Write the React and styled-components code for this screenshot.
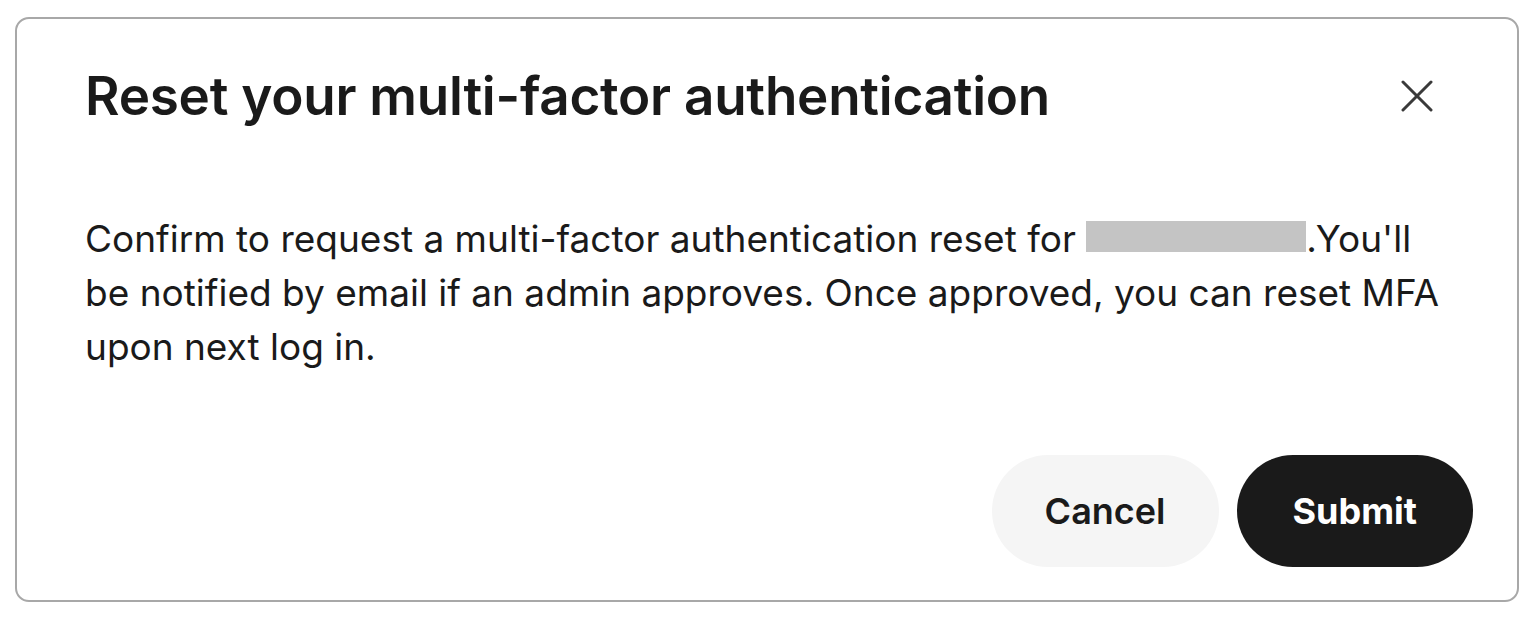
import React from 'react'
import styled, { createGlobalStyle } from 'styled-components'

const GlobalStyle = createGlobalStyle`
  body {
    margin: 0;
    background: #fff;
    font-family: Inter, "Noto Sans", "Liberation Sans", sans-serif;
    color: #1a1a1a;
  }
`

const Page = styled.div`
  padding: 17px 0 0 15px;
`

const Card = styled.div`
  box-sizing: border-box;
  width: 1504px;
  height: 585px;
  border: 2px solid #a8a8a8;
  border-radius: 14px;
  padding: 45px 44px 33px 68px;
  display: flex;
  flex-direction: column;
`

const Header = styled.div`
  display: flex;
  align-items: center;
  justify-content: space-between;
  padding-right: 40px;
`

const Title = styled.h2`
  margin: 0;
  font-size: 53px;
  line-height: 64px;
  font-weight: 600;
  letter-spacing: -0.25px;
`

const CloseButton = styled.button`
  border: 0;
  background: none;
  padding: 0;
  width: 32px;
  height: 32px;
  display: flex;
  color: #3a3a3a;
  cursor: pointer;
`

const Body = styled.p`
  margin: 84px 0 0;
  max-width: 1370px;
  font-size: 37px;
  line-height: 54px;
  font-weight: 400;
`

const Redacted = styled.span`
  display: inline-block;
  width: 220px;
  height: 31px;
  background: #c4c4c4;
`

const Footer = styled.div`
  margin-top: auto;
  display: flex;
  justify-content: flex-end;
  gap: 18px;
`

const Button = styled.button`
  height: 112px;
  padding: 0 ${p => (p.$primary ? 56 : 53)}px;
  border: 0;
  border-radius: 56px;
  font-family: inherit;
  font-size: 36px;
  font-weight: ${p => (p.$primary ? 700 : 600)};
  background: ${p => (p.$primary ? '#1a1a1a' : '#f5f5f5')};
  color: ${p => (p.$primary ? '#fff' : '#1a1a1a')};
  cursor: pointer;
`

const CloseIcon = () => (
  <svg width="32" height="32" viewBox="0 0 32 32" fill="none" stroke="currentColor" strokeWidth="3" strokeLinecap="round">
    <line x1="2" y1="2" x2="30" y2="30" />
    <line x1="30" y1="2" x2="2" y2="30" />
  </svg>
)

export default function App() {
  return (
    <Page>
      <GlobalStyle />
      <Card>
        <Header>
          <Title>Reset your multi-factor authentication</Title>
          <CloseButton aria-label="Close">
            <CloseIcon />
          </CloseButton>
        </Header>
        <Body>
          Confirm to request a multi-factor authentication reset for <Redacted />.You'll be notified by email if an admin approves. Once approved, you can reset MFA upon next log in.
        </Body>
        <Footer>
          <Button>Cancel</Button>
          <Button $primary>Submit</Button>
        </Footer>
      </Card>
    </Page>
  )
}
